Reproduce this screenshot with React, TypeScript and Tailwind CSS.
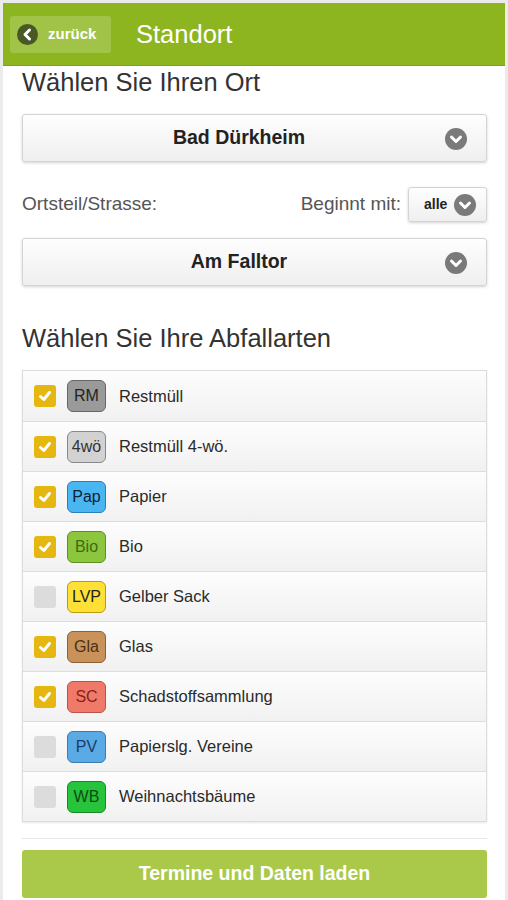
import React from 'react';

const font = { fontFamily: '"Liberation Sans", Arial, sans-serif' };

type Waste = { code: string; label: string; checked: boolean; badge: string };

const wastes: Waste[] = [
  { code: 'RM', label: 'Restmüll', checked: true, badge: 'bg-[#9a9a9a] border-[#666] text-[#222]' },
  { code: '4wö', label: 'Restmüll 4-wö.', checked: true, badge: 'bg-[#d2d2d2] border-[#888] text-[#333]' },
  { code: 'Pap', label: 'Papier', checked: true, badge: 'bg-[#49b6f2] border-[#2a7fb8] text-[#123]' },
  { code: 'Bio', label: 'Bio', checked: true, badge: 'bg-[#8cc63e] border-[#5f8f24] text-[#3d6a12]' },
  { code: 'LVP', label: 'Gelber Sack', checked: false, badge: 'bg-[#ffe135] border-[#b89b10] text-[#222]' },
  { code: 'Gla', label: 'Glas', checked: true, badge: 'bg-[#c9925a] border-[#8d6236] text-[#4a3018]' },
  { code: 'SC', label: 'Schadstoffsammlung', checked: true, badge: 'bg-[#f07a6a] border-[#b9524a] text-[#8a1f1a]' },
  { code: 'PV', label: 'Papierslg. Vereine', checked: false, badge: 'bg-[#5aaae6] border-[#3b7cb0] text-[#1b3e66]' },
  { code: 'WB', label: 'Weihnachtsbäume', checked: false, badge: 'bg-[#26c43a] border-[#178a25] text-[#0d4a14]' },
];

function ChevronCircle({ size = 22 }: { size?: number }) {
  return (
    <svg width={size} height={size} viewBox="0 0 22 22">
      <circle cx="11" cy="11" r="11" fill="#7a7a7a" />
      <path d="M6.5 9 L11 13.5 L15.5 9" stroke="#fff" strokeWidth="3" fill="none" strokeLinecap="round" strokeLinejoin="round" />
    </svg>
  );
}

function SelectBox({ value }: { value: string }) {
  return (
    <div className="relative h-[48px] flex items-center justify-center pr-[31px] rounded-[3px] border border-[#d4d4d4] bg-gradient-to-b from-[#fefefe] to-[#efefef] shadow-[0_1px_3px_rgba(0,0,0,0.18)]">
      <span className="text-[19.5px] font-bold text-[#222]">{value}</span>
      <div className="absolute right-[19px] top-[13px]">
        <ChevronCircle />
      </div>
    </div>
  );
}

function Checkbox({ checked }: { checked: boolean }) {
  if (!checked) return <div className="w-[22px] h-[22px] rounded-[3px] bg-[#dcdcdc]" />;
  return (
    <div className="w-[22px] h-[22px] rounded-[3px] bg-[#e6b710] flex items-center justify-center">
      <svg width="14" height="14" viewBox="0 0 14 14">
        <path d="M2.5 7.5 L5.8 10.5 L11.5 3.5" stroke="#fff" strokeWidth="3" fill="none" strokeLinecap="round" strokeLinejoin="round" />
      </svg>
    </div>
  );
}

export default function App() {
  return (
    <div className="min-h-[900px] bg-[#ebebeb] px-[3px] pt-[3px]" style={font}>
      <div className="bg-white min-h-[897px]">
        {/* Header */}
        <div className="h-[63px] bg-[#8db51f] border-b border-[#7da11a] flex items-center pl-[7px]">
          <div className="h-[37px] w-[101px] rounded-[3px] bg-[#a1c448] flex items-center pl-[7px] gap-[10px]">
            <svg width="21" height="21" viewBox="0 0 21 21">
              <circle cx="10.5" cy="10.5" r="10.5" fill="#4a5828" />
              <path d="M12.5 6 L8 10.5 L12.5 15" stroke="#fff" strokeWidth="3" fill="none" strokeLinecap="round" strokeLinejoin="round" />
            </svg>
            <span className="text-white text-[15px] font-bold">zurück</span>
          </div>
          <span className="ml-[25px] text-white text-[25.5px]">Standort</span>
        </div>

        <div className="pl-[19px] pr-[18px]">
          <h2 className="text-[25.5px] leading-[32px] text-[#333]">Wählen Sie Ihren Ort</h2>
          <div className="mt-[16px]">
            <SelectBox value="Bad Dürkheim" />
          </div>

          <div className="mt-[25px] h-[35px] flex items-center justify-between">
            <span className="text-[19px] text-[#555]">Ortsteil/Strasse:</span>
            <div className="flex items-center gap-[7px]">
              <span className="text-[19px] text-[#555]">Beginnt mit:</span>
              <div className="h-[35px] w-[79px] flex items-center justify-between pl-[15px] pr-[10px] rounded-[3px] border border-[#d4d4d4] bg-gradient-to-b from-[#fefefe] to-[#efefef] shadow-[0_1px_3px_rgba(0,0,0,0.18)]">
                <span className="text-[14px] font-bold text-[#222]">alle</span>
                <ChevronCircle />
              </div>
            </div>
          </div>

          <div className="mt-[16px]">
            <SelectBox value="Am Falltor" />
          </div>

          <h2 className="mt-[36px] text-[25.5px] leading-[32px] text-[#333]">Wählen Sie Ihre Abfallarten</h2>

          <div className="mt-[16px] border border-[#dcdcdc] shadow-[0_1px_2px_rgba(0,0,0,0.1)]">
            {wastes.map((w, i) => (
              <div
                key={w.code}
                className={`h-[50px] flex items-center pl-[11px] bg-gradient-to-b from-[#fdfdfd] to-[#f1f1f1] ${i > 0 ? 'border-t border-[#dddddd]' : ''}`}
              >
                <Checkbox checked={w.checked} />
                <div className={`ml-[11px] w-[39px] h-[32px] rounded-[6px] border flex items-center justify-center text-[16px] ${w.badge}`}>
                  {w.code}
                </div>
                <span className="ml-[13px] text-[16.5px] text-[#2a2a2a]">{w.label}</span>
              </div>
            ))}
          </div>

          <div className="mt-[16px] border-t border-[#e6e6e6]" />

          <button className="mt-[11px] w-full h-[48px] rounded-[3px] bg-[#aac94a] text-white text-[19.5px] font-bold">
            Termine und Daten laden
          </button>
        </div>
      </div>
    </div>
  );
}
